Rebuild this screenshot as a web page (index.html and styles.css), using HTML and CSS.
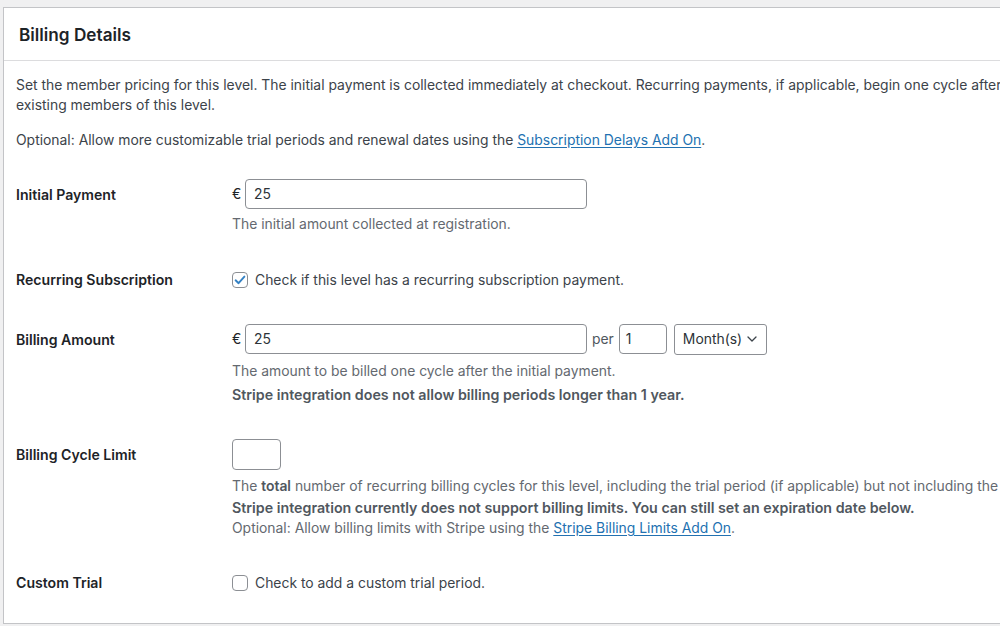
FILE: index.html
```html
<!DOCTYPE html>
<html>
<head>
<meta charset="utf-8">
<link rel="stylesheet" href="styles.css">
</head>
<body>
<div class="card">
  <div class="card-head"><h2>Billing Details</h2></div>
  <div class="card-body">
    <p class="intro">Set the member pricing for this level. The initial payment is collected immediately at checkout. Recurring payments, if applicable, begin one cycle after<br>existing members of this level.</p>
    <p class="intro second">Optional: Allow more customizable trial periods and renewal dates using the <a href="#">Subscription Delays Add On</a>.</p>

    <div class="form">
      <div class="row r1">
        <div class="th">Initial Payment</div>
        <div class="td">
          <div class="field"><span class="cur">€</span><span class="input wide">25</span></div>
          <p class="desc d1">The initial amount collected at registration.</p>
        </div>
      </div>

      <div class="row r2">
        <div class="th">Recurring Subscription</div>
        <div class="td">
          <label class="check"><span class="box checked"><svg viewBox="0 0 16 16" width="16" height="16"><path d="M3.6 8.3 L6.6 11.2 L12.4 4.6" fill="none" stroke="#3582c4" stroke-width="1.9" stroke-linecap="round" stroke-linejoin="round"/></svg></span>Check if this level has a recurring subscription payment.</label>
        </div>
      </div>

      <div class="row r3">
        <div class="th">Billing Amount</div>
        <div class="td">
          <div class="field"><span class="cur">€</span><span class="input wide">25</span><span class="per">per</span><span class="input small">1</span><span class="select">Month(s)<svg viewBox="0 0 10 6" width="10" height="6"><path d="M1 1 L5 5 L9 1" fill="none" stroke="#3c434a" stroke-width="1.3" stroke-linecap="round" stroke-linejoin="round"/></svg></span></div>
          <p class="desc d3">The amount to be billed one cycle after the initial payment.</p>
          <p class="desc strong">Stripe integration does not allow billing periods longer than 1 year.</p>
        </div>
      </div>

      <div class="row r4">
        <div class="th">Billing Cycle Limit</div>
        <div class="td">
          <span class="input tiny"></span>
          <div class="desc-block">
            <p class="desc">The <b>total</b> number of recurring billing cycles for this level, including the trial period (if applicable) but not including the</p>
            <p class="desc strong">Stripe integration currently does not support billing limits. You can still set an expiration date below.</p>
            <p class="desc">Optional: Allow billing limits with Stripe using the <a href="#">Stripe Billing Limits Add On</a>.</p>
          </div>
        </div>
      </div>

      <div class="row r5">
        <div class="th">Custom Trial</div>
        <div class="td">
          <label class="check"><span class="box"></span>Check to add a custom trial period.</label>
        </div>
      </div>
    </div>
  </div>
</div>
</body>
</html>
```

FILE: styles.css
```css
html, body {
  margin: 0;
  padding: 0;
  background: #f0f0f1;
  overflow: hidden;
  width: 1000px;
  height: 626px;
}
body {
  font-family: Inter, "Liberation Sans", Arial, sans-serif;
  font-size: 13.9px;
  color: #3c434a;
}
.card {
  margin: 7px 0 0 3px;
  width: 1120px;
  background: #fff;
  border: 1px solid #c3c4c7;
  box-sizing: border-box;
  height: 617px;
}
.card-head {
  height: 52px;
  border-bottom: 1px solid #dcdcde;
  display: flex;
  align-items: center;
  padding-left: 15px;
}
.card-head h2 {
  margin: 0;
  font-size: 17.2px;
  font-weight: 600;
  color: #1d2327;
}
.card-body {
  padding: 14px 12px 0;
}
.intro {
  margin: 0;
  line-height: 20px;
  white-space: nowrap;
}
.intro.second {
  margin-top: 15px;
}
a {
  color: #2271b1;
  text-decoration: underline;
  text-underline-offset: 2px;
}
.form {
  margin-top: 14px;
}
.row {
  display: grid;
  grid-template-columns: 216px 1fr;
}
.th {
  font-weight: 600;
  font-size: 14.1px;
  color: #1d2327;
  line-height: 20px;
  padding-top: 21px;
}
.td {
  padding-top: 15px;
  padding-bottom: 15px;
}
.r2 .td { padding-top: 21px; padding-bottom: 19px; }
.r3 .td { padding-bottom: 19px; }
.r5 .th { padding-top: 19px; }
.r5 .td { padding-top: 19px; padding-bottom: 19px; }
.field {
  display: flex;
  align-items: center;
  height: 30px;
}
.cur {
  width: 13px;
  color: #1d2327;
}
.input {
  display: inline-flex;
  align-items: center;
  box-sizing: border-box;
  height: 30px;
  border: 1px solid #8c8f94;
  border-radius: 4px;
  padding: 0 8px;
  color: #2c3338;
  background: #fff;
}
.input.wide { width: 342px; }
.input.small { width: 48px; padding-left: 6px; }
.input.tiny { width: 49px; height: 31px; display: block; }
.per {
  margin: 0 5px 0 5px;
  color: #50575e;
}
.select {
  margin-left: 7px;
  box-sizing: border-box;
  width: 93px;
  height: 31px;
  border: 1px solid #8c8f94;
  border-radius: 3px;
  display: inline-flex;
  align-items: center;
  justify-content: space-between;
  padding: 0 9px 0 8px;
  color: #2c3338;
}
.desc {
  margin: 0;
  line-height: 20px;
  color: #646970;
  white-space: nowrap;
}
.d1 { margin-top: 5px; }
.d3 { margin-top: 7px; }
.strong {
  font-weight: 600;
  font-size: 14.25px;
  color: #50575e;
  margin-top: 4px;
}
.desc-block { margin-top: 6px; }
.desc-block .desc { line-height: 21px; margin-top: 0; }
.desc b { color: #50575e; font-weight: 600; }
.check {
  display: flex;
  align-items: center;
  line-height: 20px;
  color: #3c434a;
}
.box {
  width: 16px;
  height: 16px;
  box-sizing: border-box;
  border: 1px solid #8c8f94;
  border-radius: 4px;
  margin-right: 7px;
  display: inline-flex;
  align-items: center;
  justify-content: center;
  background: #fff;
}
.box svg { display: block; flex: none; }
```
